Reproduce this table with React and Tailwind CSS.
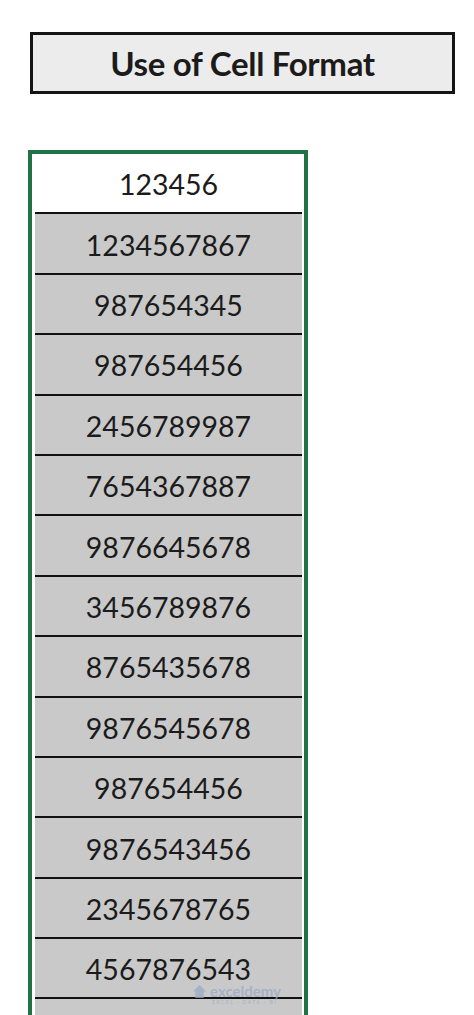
import React from "react";

const numbers = [
  "1234567867",
  "987654345",
  "987654456",
  "2456789987",
  "7654367887",
  "9876645678",
  "3456789876",
  "8765435678",
  "9876545678",
  "987654456",
  "9876543456",
  "2345678765",
  "4567876543",
  "",
];

export default function App() {
  return (
    <div className="relative min-h-[1015px] bg-white pt-[32px] font-['Lato','Noto_Sans',sans-serif] text-[#1b1b1b]">
      {/* title */}
      <div className="ml-[30px] flex h-[62px] w-[425px] items-center justify-center border-[3px] border-[#151515] bg-[#ececec]">
        <h1 className="pt-[2px] text-[33px] font-bold tracking-[-0.3px]">Use of Cell Format</h1>
      </div>

      {/* column */}
      <div className="ml-[28px] mt-[56px] w-[280px] border-4 border-[#217346] bg-white pl-[3px] pr-[2px]">
        <div className="flex h-[60.4px] items-center justify-center border-b-2 border-[#111] bg-white pt-[2px] text-[28.5px]">
          123456
        </div>
        {numbers.map((n, i) => (
          <div
            key={i}
            className="flex h-[60.4px] items-center justify-center border-b-2 border-[#111] bg-[#c9c9c9] pt-[3px] text-[28.5px]"
          >
            {n}
          </div>
        ))}
      </div>

      {/* watermark */}
      <div className="pointer-events-none absolute left-[192px] top-[984px] flex flex-col items-center opacity-75">
        <div className="flex items-center gap-[3px]">
          <svg width="15" height="15" viewBox="0 0 14 14">
            <path d="M7 1 L13 7 L11 7 L11 13 L3 13 L3 7 L1 7 Z" fill="#9aabc4" />
          </svg>
          <span className="text-[15px] font-bold leading-none text-[#9aabc4]">exceldemy</span>
        </div>
        <span className="ml-[16px] mt-[1px] text-[5px] leading-none tracking-[1.5px] text-[#9aabc4]">EXCEL · DATA · BI</span>
      </div>
    </div>
  );
}
